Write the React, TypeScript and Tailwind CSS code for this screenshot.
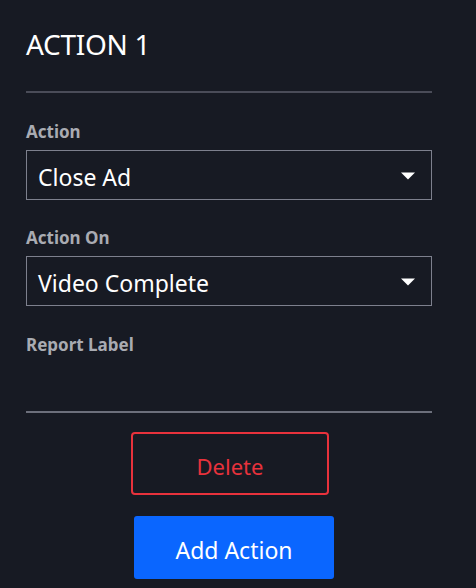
import React from 'react';

const Caret: React.FC = () => (
  <svg width="16" height="8" viewBox="0 0 16 8" className="mt-[2px] shrink-0">
    <path d="M1 0.5 L15 0.5 L8 7.5 Z" fill="#ffffff" />
  </svg>
);

const SelectBox: React.FC<{ value: string }> = ({ value }) => (
  <div className="flex h-[50px] items-center justify-between border-[1.5px] border-[#7d808d] pl-[11px] pr-[15px]">
    <span className="mt-[4px] text-[23px] leading-none text-white">{value}</span>
    <Caret />
  </div>
);

const Label: React.FC<{ children: React.ReactNode }> = ({ children }) => (
  <div className="text-[17px] font-bold leading-none text-[#a9abb2]">{children}</div>
);

const App: React.FC = () => {
  return (
    <div
      className="min-h-[588px] w-[476px] bg-[#171a23] pl-[26px] pr-[44px] pt-[30px]"
      style={{ fontFamily: '"Noto Sans", "Open Sans", sans-serif' }}
    >
      <h1 className="text-[28px] font-normal leading-none tracking-[-0.3px] text-white">ACTION 1</h1>
      <div className="mt-[33px] h-[2px] bg-[#4a4c58]" />

      <div className="mt-[30px]">
        <Label>Action</Label>
        <div className="mt-[10px]">
          <SelectBox value="Close Ad" />
        </div>
      </div>

      <div className="mt-[29px]">
        <Label>Action On</Label>
        <div className="mt-[10px]">
          <SelectBox value="Video Complete" />
        </div>
      </div>

      <div className="mt-[30px]">
        <Label>Report Label</Label>
      </div>
      <div className="mt-[58px] h-[2px] bg-[#6c6f7b]" />

      <div className="flex flex-col items-center">
        <button className="ml-[2px] mt-[19px] flex h-[63px] w-[198px] items-center justify-center rounded-[4px] border-2 border-[#e8323c] pt-[5px] text-[22px] text-[#e8323c]">
          Delete
        </button>
        <button className="ml-[10px] mt-[21px] flex h-[63px] w-[200px] items-center justify-center rounded-[3px] bg-[#0a66ff] pt-[5px] text-[23px] text-white">
          Add Action
        </button>
      </div>
    </div>
  );
};

export default App;
